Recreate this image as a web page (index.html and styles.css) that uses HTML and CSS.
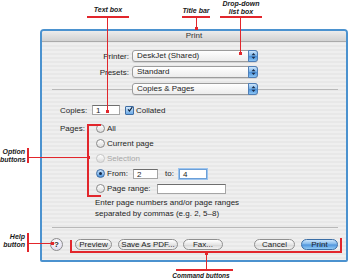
FILE: index.html
```html
<!DOCTYPE html>
<html lang="en">
<head>
    <meta charset="UTF-8">
    <meta name="viewport" content="width=device-width, initial-scale=1.0">
    <title>Print dialog</title>
    <link rel="stylesheet" href="styles.css">
</head>
<body>
    <div class="stage">
        <div class="window">
            <div class="titlebar">Print</div>

            <div class="top">
                <span class="lbl">Printer:</span>
                <div class="popup"><span>DeskJet (Shared)</span><span class="arrows"><svg width="5" height="8" viewBox="0 0 5 8"><path d="M0.5 3.2 L2.5 1 L4.5 3.2Z M0.5 4.8 L2.5 7 L4.5 4.8Z" fill="#1d2f4a"/></svg></span></div>
                <span></span>

                <span class="lbl">Presets:</span>
                <div class="popup"><span>Standard</span><span class="arrows"><svg width="5" height="8" viewBox="0 0 5 8"><path d="M0.5 3.2 L2.5 1 L4.5 3.2Z M0.5 4.8 L2.5 7 L4.5 4.8Z" fill="#1d2f4a"/></svg></span></div>
                <span></span>

                <span class="rule rule-left"></span>
                <div class="popup pane-popup"><span>Copies &amp; Pages</span><span class="arrows"><svg width="5" height="8" viewBox="0 0 5 8"><path d="M0.5 3.2 L2.5 1 L4.5 3.2Z M0.5 4.8 L2.5 7 L4.5 4.8Z" fill="#1d2f4a"/></svg></span></div>
                <span class="rule rule-right"></span>
            </div>

            <div class="pane">
                <div class="copies">
                    <span class="lbl-left">Copies:</span>
                    <span class="field copies-field">1</span>
                    <span class="check"><svg width="7" height="7" viewBox="0 0 7 7"><path d="M1.2 3.4 L2.9 5.4 L6.2 0.6" fill="none" stroke="#10243f" stroke-width="1.4"/></svg></span>
                    <span class="check-text">Collated</span>
                </div>

                <div class="pages">
                    <span class="lbl-left">Pages:</span>
                    <div class="options">
                        <div class="opt"><span class="radio"></span>All</div>
                        <div class="opt"><span class="radio"></span>Current page</div>
                        <div class="opt disabled"><span class="radio"></span>Selection</div>
                        <div class="opt"><span class="radio on"></span><span class="from">From:</span><span class="field from-field">2</span><span class="to">to:</span><span class="field focus to-field">4</span></div>
                        <div class="opt"><span class="radio"></span><span>Page range:</span><span class="field range-field"></span></div>
                        <p class="hint">Enter page numbers and/or page ranges<br>separated by commas (e.g. 2, 5&ndash;8)</p>
                    </div>
                </div>
            </div>

            <div class="sep"></div>

            <div class="buttons">
                <span class="help">?</span>
                <span class="btn btn-preview">Preview</span>
                <span class="btn btn-pdf">Save As PDF...</span>
                <span class="btn btn-fax">Fax...</span>
                <span class="spacer"></span>
                <span class="btn btn-cancel">Cancel</span>
                <span class="btn btn-print">Print</span>
            </div>
        </div>

        <!-- callouts drawn over the dialog -->
        <div class="note note-textbox">Text box</div>
        <div class="red" style="left:87px;top:16px;width:42px;height:2px"></div>
        <div class="red" style="left:107px;top:18px;width:1px;height:94px"></div>
        <div class="red" style="left:106px;top:110px;width:3px;height:3px"></div>

        <div class="note note-title">Title bar</div>
        <div class="red" style="left:182px;top:16px;width:28px;height:2px"></div>
        <div class="red" style="left:196px;top:18px;width:1px;height:11px"></div>
        <div class="red" style="left:195px;top:27px;width:3px;height:3px"></div>

        <div class="note note-dropdown">Drop-down<br>list box</div>
        <div class="red" style="left:220px;top:16px;width:42px;height:2px"></div>
        <div class="red" style="left:240px;top:18px;width:1px;height:35px"></div>
        <div class="red" style="left:239px;top:52px;width:3px;height:3px"></div>

        <div class="note note-option">Option<br>buttons</div>
        <div class="red" style="left:27px;top:148px;width:2px;height:15px"></div>
        <div class="red" style="left:28px;top:157px;width:60px;height:1px"></div>
        <div class="red" style="left:87px;top:156px;width:3px;height:3px"></div>
        <div class="red" style="left:87px;top:124px;width:2px;height:73px"></div>
        <div class="red" style="left:87px;top:124px;width:14px;height:2px"></div>
        <div class="red" style="left:87px;top:195px;width:14px;height:2px"></div>

        <div class="note note-help">Help<br>button</div>
        <div class="red" style="left:27px;top:233px;width:2px;height:19px"></div>
        <div class="red" style="left:28px;top:243px;width:24px;height:1px"></div>
        <div class="red" style="left:51px;top:242px;width:3px;height:3px"></div>

        <div class="red" style="left:70px;top:240px;width:2px;height:13px"></div>
        <div class="red" style="left:70px;top:251px;width:272px;height:2px"></div>
        <div class="red" style="left:340px;top:238px;width:2px;height:15px"></div>
        <div class="red" style="left:206px;top:253px;width:1px;height:16px"></div>
        <div class="red" style="left:205px;top:252px;width:3px;height:3px"></div>
        <div class="red" style="left:176px;top:269px;width:57px;height:2px"></div>
        <div class="note note-command">Command buttons</div>
    </div>
</body>
</html>
```

FILE: styles.css
```css
/* Page */
body {
    margin: 0;
    padding: 0;
    background: #fff;
    font-family: "Liberation Sans", Arial, sans-serif;
    font-size: 8px;
    color: #1e1e1e;
}
.stage {
    position: relative;
    width: 350px;
    height: 279px;
    overflow: hidden;
    padding-top: 29px;
    box-sizing: border-box;
}

/* Dialog window */
.window {
    margin-left: 40px;
    width: 308px;
    height: 233px;
    box-sizing: border-box;
    border: 2px solid #4b92cf;
    border-radius: 4px 4px 2px 2px;
    background: repeating-linear-gradient(to bottom, #efefef 0, #efefef 2px, #e8e8e8 2px, #e8e8e8 4px);
    display: flex;
    flex-direction: column;
}
.titlebar {
    height: 10px;
    line-height: 10px;
    text-align: center;
    color: #333;
    background: linear-gradient(#ececec, #d2d2d2);
    border-bottom: 1px solid #aaa;
    border-radius: 2px 2px 0 0;
}

/* Printer / presets popups */
.top {
    display: grid;
    grid-template-columns: 87px 126px 1fr;
    grid-template-rows: 12px 12px 12px;
    column-gap: 3px;
    row-gap: 4px;
    margin-top: 8px;
    padding-right: 8px;
    align-items: center;
}
.lbl {
    text-align: right;
}
.popup {
    height: 12px;
    box-sizing: border-box;
    border: 1px solid #9c9c9c;
    border-radius: 3px;
    background: linear-gradient(#ffffff, #ececec);
    display: flex;
    justify-content: space-between;
    align-items: center;
    padding-left: 4px;
    line-height: 10px;
    box-shadow: 0 1px 0 rgba(0, 0, 0, 0.08);
}
.arrows {
    width: 10px;
    height: 12px;
    margin: -1px -1px -1px 0;
    box-sizing: border-box;
    border: 1px solid #4f7fb8;
    border-radius: 0 3px 3px 0;
    background: linear-gradient(#cfe6fb, #7ab4ea 45%, #4d93dc 55%, #8cc5f3);
    display: flex;
    align-items: center;
    justify-content: center;
}
.pane-popup {
    margin-top: 2px;
}
.rule {
    height: 1px;
    background: #b9b9b9;
    margin-top: 2px;
}
.rule-left {
    margin-left: 10px;
    margin-right: -3px;
}
.rule-right {
    margin-left: -3px;
}

/* Copies & Pages pane */
.pane {
    padding-left: 18px;
}
.copies {
    display: flex;
    align-items: center;
    margin-top: 11px;
    height: 10px;
}
.lbl-left {
    width: 32px;
    flex: none;
}
.field {
    display: inline-block;
    height: 10px;
    line-height: 9px;
    box-sizing: border-box;
    background: #fff;
    border: 1px solid #a5a5a5;
    border-top-color: #6e6e6e;
    padding-left: 3px;
}
.copies-field {
    width: 28px;
}
.check {
    width: 7px;
    height: 7px;
    margin-left: 5px;
    border: 1px solid #3f6da3;
    border-radius: 1px;
    background: linear-gradient(#d3e8fb, #6aa9e6);
    display: flex;
    align-items: center;
    justify-content: center;
}
.check svg {
    margin-top: -2px;
    margin-left: 1px;
}
.check-text {
    margin-left: 2px;
}
.pages {
    display: flex;
    margin-top: 6px;
}
.pages .lbl-left {
    line-height: 15px;
}
.options {
    padding-left: 4px;
}
.opt {
    display: flex;
    align-items: center;
    height: 15px;
}
.radio {
    width: 7px;
    height: 7px;
    border: 1px solid #8a8a8a;
    border-radius: 50%;
    background: linear-gradient(#ffffff, #dcdcdc);
    margin-right: 2px;
    flex: none;
    position: relative;
}
.radio.on {
    border-color: #3f6da3;
    background: linear-gradient(#c9e2fa, #4f97e0);
}
.radio.on::after {
    content: "";
    position: absolute;
    left: 2px;
    top: 2px;
    width: 3px;
    height: 3px;
    border-radius: 50%;
    background: #152a48;
}
.disabled {
    color: #a8a8a8;
}
.disabled .radio {
    border-color: #c6c6c6;
}
.from {
    width: 26px;
}
.from-field {
    width: 25px;
}
.to {
    margin-left: 7px;
    width: 14px;
}
.to-field {
    width: 28px;
}
.focus {
    border: 1px solid #6b9fd8;
    box-shadow: 0 0 0 1px #9cc4ee;
}
.range-field {
    width: 69px;
    margin-left: 6px;
}
.hint {
    margin: 1px 0 0 -1px;
    line-height: 11px;
}
.sep {
    height: 1px;
    background: #b9b9b9;
    margin: 8px 8px 0 10px;
}

/* Bottom buttons */
.buttons {
    display: flex;
    align-items: center;
    margin-top: 10px;
    padding: 0 8px;
    height: 13px;
}
.help {
    width: 13px;
    height: 13px;
    box-sizing: border-box;
    border: 1px solid #8d8d8d;
    border-radius: 50%;
    background: radial-gradient(circle at 50% 30%, #ffffff, #d9d4ea);
    font-weight: bold;
    text-align: center;
    line-height: 11px;
    color: #2a2a2a;
    margin-right: 12px;
}
.btn {
    height: 11px;
    line-height: 9px;
    box-sizing: border-box;
    border: 1px solid #909090;
    border-radius: 6px;
    background: linear-gradient(#ffffff, #e6e6e6 50%, #d6d6d6 55%, #f4f4f4);
    text-align: center;
    margin-right: 6px;
}
.btn-preview { width: 37px; }
.btn-pdf { width: 60px; margin-right: 5px; }
.btn-fax { width: 40px; margin-right: 0; }
.btn-cancel { width: 41px; }
.btn-print {
    width: 37px;
    margin-right: 0;
    border-color: #3b6ea6;
    background: linear-gradient(#cbe4fb, #7bb5ea 48%, #4c92dc 52%, #93cbf5);
}
.spacer {
    flex: 1;
}

/* Callouts */
.red {
    position: absolute;
    background: #e2262c;
}
.note {
    position: absolute;
    font-size: 7px;
    font-weight: bold;
    font-style: italic;
    line-height: 8px;
    color: #1a1a1a;
}
.note-textbox { left: 87px; top: 6px; width: 42px; text-align: center; }
.note-title { left: 178px; top: 7px; width: 36px; text-align: center; }
.note-dropdown { left: 214px; top: 0; width: 54px; text-align: center; }
.note-option { left: 0; top: 148px; width: 25px; text-align: right; }
.note-help { left: 0; top: 233px; width: 25px; text-align: right; }
.note-command { left: 168px; top: 272px; width: 66px; text-align: center; font-size: 6.5px; }
```
